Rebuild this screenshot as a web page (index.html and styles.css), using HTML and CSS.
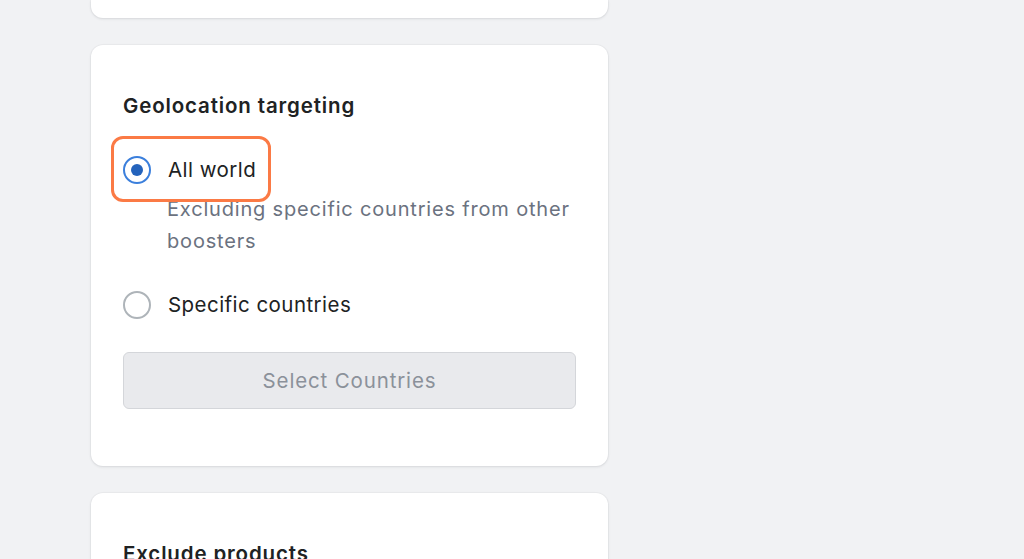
FILE: index.html
```html
<!DOCTYPE html>
<html lang="en">
<head>
<meta charset="utf-8">
<title>Geolocation targeting</title>
<link rel="stylesheet" href="styles.css">
</head>
<body>
<main class="column">
  <section class="card card-cut"></section>

  <section class="card card-geo">
    <h2 class="card-title">Geolocation targeting</h2>
    <div class="choice-list">
      <div class="choice-item">
        <label class="choice highlighted">
          <span class="radio radio-checked"><span class="radio-dot"></span></span>
          <span class="choice-label">All world</span>
        </label>
        <p class="choice-help">Excluding specific countries from other boosters</p>
      </div>
      <div class="choice-item">
        <label class="choice">
          <span class="radio"></span>
          <span class="choice-label">Specific countries</span>
        </label>
      </div>
    </div>
    <button class="btn-disabled" type="button" disabled>Select Countries</button>
  </section>

  <section class="card card-exclude">
    <h2 class="card-title">Exclude products</h2>
    <p class="choice-help">Choose products that will not be affected by this booster</p>
  </section>
</main>
</body>
</html>
```

FILE: styles.css
```css
* { box-sizing: border-box; }

html, body {
  margin: 0;
  padding: 0;
  height: 100%;
  overflow: hidden;
}

body {
  background: #f1f2f4;
  font-family: Inter, "Noto Sans", "Liberation Sans", sans-serif;
  color: #202223;
  -webkit-font-smoothing: antialiased;
}

.column {
  width: 517px;
  margin-left: 91px;
  display: flex;
  flex-direction: column;
  gap: 27px;
}

.card {
  background: #ffffff;
  border-radius: 12px;
  box-shadow: 0 1px 3px rgba(22, 29, 37, 0.10), 0 0 0 1px rgba(63, 63, 68, 0.03);
}

.card-cut {
  height: 18px;
  border-radius: 0 0 12px 12px;
}

.card-geo {
  padding: 45px 32px 57px;
  display: flex;
  flex-direction: column;
}

.card-exclude {
  padding: 45px 32px 60px;
}

.card-title {
  margin: 0;
  font-size: 20.5px;
  line-height: 32px;
  font-weight: 600;
  letter-spacing: 0.85px;
  color: #202223;
}

.choice-list {
  display: flex;
  flex-direction: column;
  gap: 32px;
  margin-top: 32px;
}

.choice {
  position: relative;
  display: inline-flex;
  align-items: center;
  gap: 17px;
  align-self: flex-start;
}

.choice-item {
  display: flex;
  flex-direction: column;
}

.highlighted::after {
  content: "";
  position: absolute;
  top: -18px;
  bottom: -16px;
  left: -12px;
  right: -15px;
  border: 3.5px solid #fb7a45;
  border-radius: 12px;
}

.radio {
  width: 28px;
  height: 28px;
  border-radius: 50%;
  border: 2.5px solid #aeb4b9;
  display: flex;
  align-items: center;
  justify-content: center;
  flex: none;
  background: #fff;
}

.radio-checked {
  border-color: #3b7fdc;
}

.radio-dot {
  width: 12px;
  height: 12px;
  border-radius: 50%;
  background: #2463bc;
}

.choice-label {
  font-size: 20.5px;
  line-height: 32px;
  letter-spacing: 0.45px;
  color: #202223;
}

.choice-help {
  margin: 7px 0 0 44px;
  font-size: 20px;
  line-height: 32px;
  letter-spacing: 0.82px;
  color: #6b7280;
}

.card-exclude .choice-help {
  margin: 12px 0 0 0;
}

.btn-disabled {
  margin-top: 31px;
  height: 57px;
  width: 100%;
  background: #e9eaed;
  border: 1px solid #d4d6da;
  border-radius: 6px;
  font-family: inherit;
  font-size: 20.5px;
  letter-spacing: 0.85px;
  color: #8b919a;
  cursor: default;
}
```
